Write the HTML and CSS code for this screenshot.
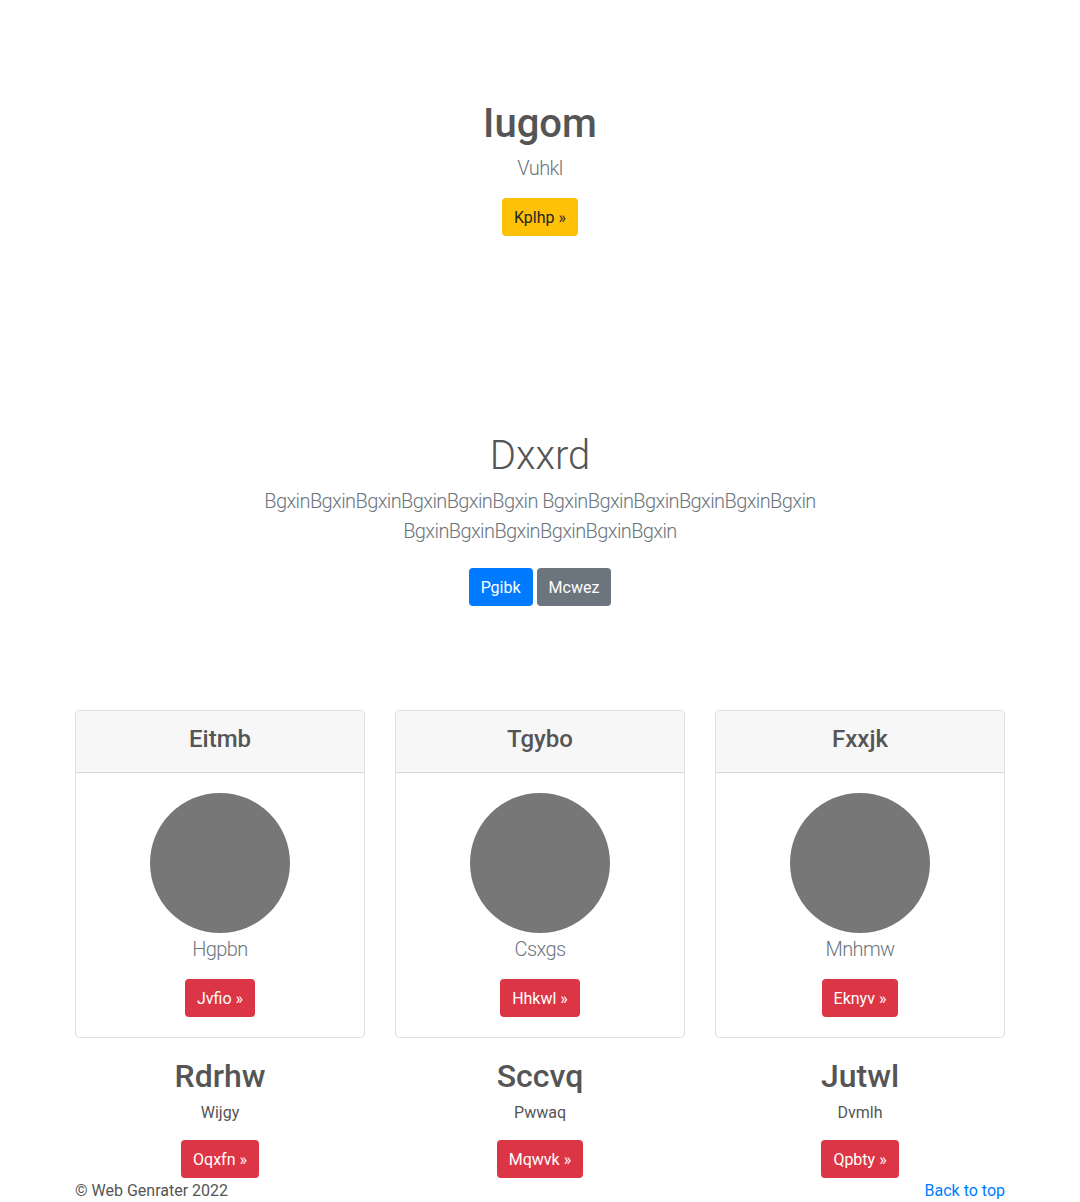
FILE: index.html
```html
<!DOCTYPE html>
<html lang="en">
<head>
<meta charset="utf-8">
<title>Web Genrater</title>
<link rel="stylesheet" href="styles.css">
</head>
<body>
<header class="hero">
  <h1 class="hero-title">Iugom</h1>
  <p class="lead muted">Vuhkl</p>
  <a class="btn btn-warning" href="#">Kplhp &raquo;</a>
</header>

<section class="jumbo">
  <div class="jumbo-inner">
    <h1 class="jumbo-title">Dxxrd</h1>
    <p class="lead muted">BgxinBgxinBgxinBgxinBgxinBgxin BgxinBgxinBgxinBgxinBgxinBgxin BgxinBgxinBgxinBgxinBgxinBgxin</p>
    <p class="jumbo-actions"><a class="btn btn-primary" href="#">Pgibk</a> <a class="btn btn-secondary" href="#">Mcwez</a></p>
  </div>
</section>

<main class="album">
  <div class="container cols">
    <div class="col">
      <div class="card">
        <div class="card-header"><h4 class="card-title">Eitmb</h4></div>
        <div class="card-body">
          <div class="avatar"></div>
          <p class="lead muted">Hgpbn</p>
          <a class="btn btn-danger" href="#">Jvfio &raquo;</a>
        </div>
      </div>
      <h2 class="col-title">Rdrhw</h2>
      <p class="col-text">Wijgy</p>
      <a class="btn btn-danger" href="#">Oqxfn &raquo;</a>
    </div>
    <div class="col">
      <div class="card">
        <div class="card-header"><h4 class="card-title">Tgybo</h4></div>
        <div class="card-body">
          <div class="avatar"></div>
          <p class="lead muted">Csxgs</p>
          <a class="btn btn-danger" href="#">Hhkwl &raquo;</a>
        </div>
      </div>
      <h2 class="col-title">Sccvq</h2>
      <p class="col-text">Pwwaq</p>
      <a class="btn btn-danger" href="#">Mqwvk &raquo;</a>
    </div>
    <div class="col">
      <div class="card">
        <div class="card-header"><h4 class="card-title">Fxxjk</h4></div>
        <div class="card-body">
          <div class="avatar"></div>
          <p class="lead muted">Mnhmw</p>
          <a class="btn btn-danger" href="#">Eknyv &raquo;</a>
        </div>
      </div>
      <h2 class="col-title">Jutwl</h2>
      <p class="col-text">Dvmlh</p>
      <a class="btn btn-danger" href="#">Qpbty &raquo;</a>
    </div>
  </div>
</main>

<footer class="container footer">
  <p class="copy">&copy; Web Genrater 2022</p>
  <a class="top-link" href="#">Back to top</a>
</footer>
</body>
</html>
```
FILE: styles.css
```css
* { box-sizing: border-box; }
html, body { margin: 0; padding: 0; }
body {
  font-family: Roboto, "Liberation Sans", Arial, sans-serif;
  font-size: 16px;
  line-height: 1.5;
  color: #555;
  background: #fff;
}
h1, h2, h4, p { margin: 0; }
a { text-decoration: none; }

.container {
  width: 960px;
  margin: 0 auto;
  padding: 0 15px;
}

.lead {
  font-size: 20px;
  font-weight: 300;
  line-height: 30px;
  letter-spacing: -0.6px;
  padding-top: 1px;
  margin-bottom: 15px;
}
.muted { color: #6c757d; }

.btn {
  display: inline-block;
  font-size: 16px;
  line-height: 24px;
  padding: 8px 12px 6px;
  border-radius: 4px;
  font-weight: 400;
  vertical-align: middle;
}
.btn-warning { background: #ffc107; color: #212529; }
.btn-primary { background: #007bff; color: #fff; }
.btn-secondary { background: #6c757d; color: #fff; }
.btn-danger { background: #dc3545; color: #fff; }

/* hero */
.hero {
  text-align: center;
  padding: 96px 0 144px;
}
.hero-title {
  font-size: 40px;
  font-weight: 500;
  line-height: 48px;
  padding-top: 4px;
  margin-bottom: 4px;
}

/* jumbotron */
.jumbo {
  text-align: center;
  padding: 48px 0;
}
.jumbo-inner {
  width: 640px;
  margin: 0 auto;
  padding: 0 15px;
}
.jumbo-title {
  font-size: 40px;
  font-weight: 300;
  line-height: 48px;
  padding-top: 4px;
  margin-bottom: 4px;
}
.jumbo .lead { padding-top: 2px; margin-bottom: 14px; }
.jumbo-actions .btn { margin: 8px 0; }

/* album */
.album { padding-top: 48px; }
.cols {
  display: grid;
  grid-template-columns: repeat(3, 1fr);
  column-gap: 30px;
}
.col { text-align: center; }

.card {
  border: 1px solid rgba(0,0,0,.125);
  border-radius: 4px;
  margin-bottom: 16px;
  overflow: hidden;
}
.card-header {
  background: #f7f7f7;
  border-bottom: 1px solid rgba(0,0,0,.125);
  padding: 12px 20px;
}
.card-title {
  font-size: 24px;
  font-weight: 500;
  line-height: 28.8px;
  padding-top: 2px;
  margin-bottom: 6px;
}
.card-body { padding: 20px; }
.avatar {
  width: 140px;
  height: 140px;
  border-radius: 50%;
  background: #777;
  margin: 0 auto;
}

.col-title {
  font-size: 32px;
  font-weight: 500;
  line-height: 38.4px;
  padding-top: 3px;
  margin-bottom: 5px;
}
.col-text { padding-top: 1px; margin-bottom: 15px; }

/* footer */
.footer {
  display: flex;
  justify-content: space-between;
  align-items: baseline;
  padding-top: 1px;
}
.copy { margin: 0; }
.top-link { color: #007bff; }
```
